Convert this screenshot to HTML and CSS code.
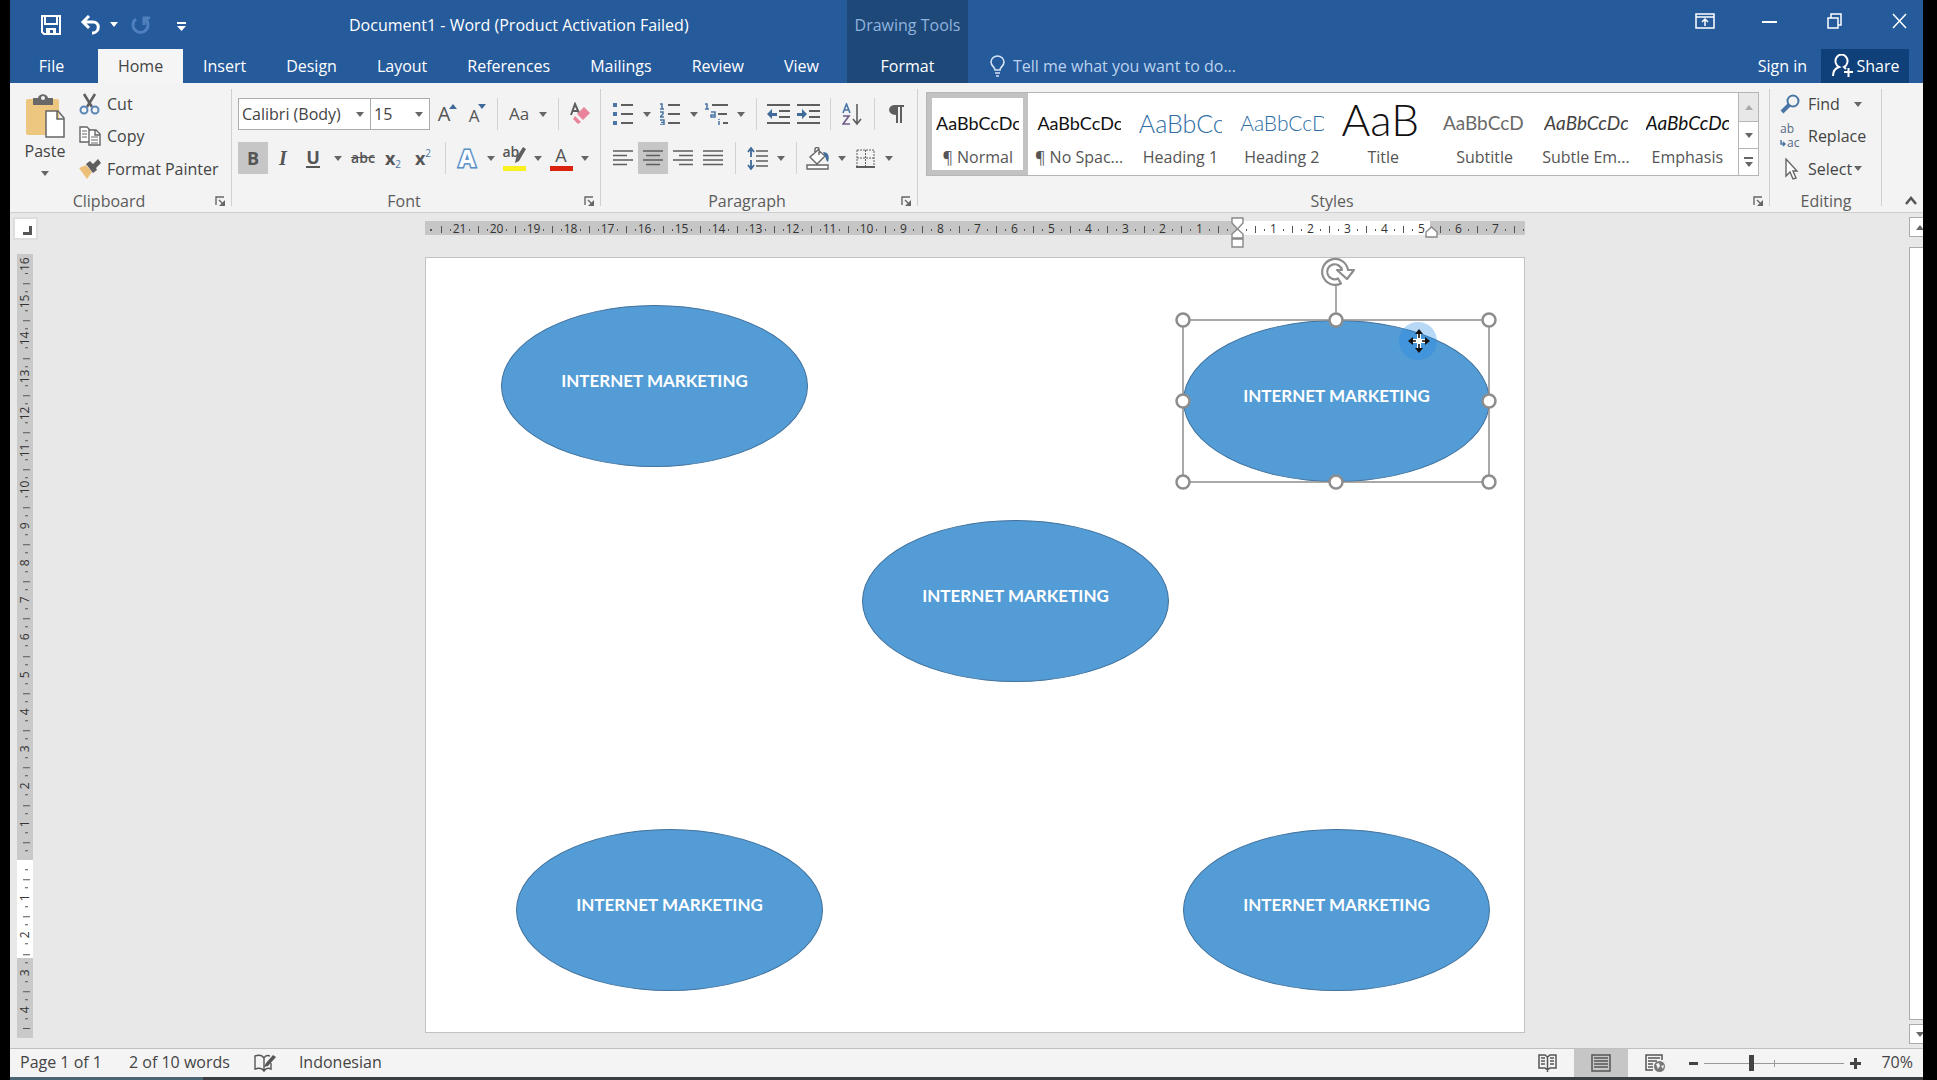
FILE: index.html
```html
<!DOCTYPE html>
<html lang="en">
<head>
<meta charset="utf-8">
<title>Document1 - Word</title>
<link rel="stylesheet" href="styles.css">
</head>
<body>
<div class="window">
  <header class="header">
    <div class="titlebar">
      <div class="quick">
        <button class="quick-btn" aria-label="Save"><svg width="20" height="20" viewBox="0 0 20 20"><path fill="none" stroke="#fff" stroke-width="2" d="M1 1h18v18H3l-2-2zM4 1v8h12V1"/><path fill="#fff" d="M5 13h10v6h-3v-4H9v4H5z"/></svg></button>
        <button class="quick-btn" aria-label="Undo"><svg width="22" height="20" viewBox="0 0 22 20"><path fill="none" stroke="#fff" stroke-width="3" d="M3 7h10c7 0 7 10 0 11h-1M9 1L3 7l6 6"/></svg></button>
        <button class="quick-caret" aria-label="Undo list"><i class="caret"></i></button>
        <button class="quick-btn" aria-label="Repeat"><svg width="20" height="20" viewBox="0 0 20 20"><path fill="none" stroke="#4f80bd" stroke-width="3" d="M5 4a7.500 7.500 0 1 0 9 0M13 10V3h6"/></svg></button>
        <button class="quick-custom" aria-label="Customize toolbar"><svg width="9" height="9" viewBox="0 0 9 9"><path fill="#fff" d="M0 0h9v2H0zM0 4h9L4.500 9z"/></svg></button>
      </div>
      <span class="doc-title">Document1 - Word (Product Activation Failed)</span>
    </div>
    <nav class="tabs">
      <button class="tab file">File</button>
      <button class="tab active">Home</button>
      <button class="tab">Insert</button>
      <button class="tab">Design</button>
      <button class="tab">Layout</button>
      <button class="tab">References</button>
      <button class="tab">Mailings</button>
      <button class="tab">Review</button>
      <button class="tab">View</button>
    </nav>
    <div class="context">
      <span class="context-title">Drawing Tools</span>
      <button class="tab">Format</button>
    </div>
    <div class="controls">
      <button aria-label="Ribbon display options"><svg width="20" height="16" viewBox="0 0 20 16"><path fill="none" stroke="#fff" stroke-width="1.500" d="M1 1h18v14H1zM1 4h18M10 13V7M7 9l3-3 3 3"/></svg></button>
      <button aria-label="Minimize"><svg width="15" height="16" viewBox="0 0 15 16"><path stroke="#fff" stroke-width="2" d="M0 9h15"/></svg></button>
      <button aria-label="Restore"><svg width="15" height="16" viewBox="0 0 15 16"><path fill="none" stroke="#fff" stroke-width="1.500" d="M1 5h10v10H1zM4 5V1h10v11h-3"/></svg></button>
      <button aria-label="Close"><svg width="15" height="16" viewBox="0 0 15 16"><path stroke="#fff" stroke-width="1.500" d="M1 1l13 14M14 1L1 15"/></svg></button>
    </div>
    <div class="tabs-end">
      <label class="tell"><svg width="15" height="22" viewBox="0 0 15 22"><path fill="none" stroke="#d5e4f5" stroke-width="1.600" d="M5 15c0-3-4-4-4-8a6.500 6 0 0 1 13 0c0 4-4 5-4 8zM5 18h5M6 21h3"/></svg><input type="text" placeholder="Tell me what you want to do..."></label>
      <a href="#" class="signin">Sign in</a>
      <button class="share"><svg width="23" height="24" viewBox="0 0 23 24"><path fill="none" stroke="#fff" stroke-width="2" d="M2 22c0-5 3-8 6-9a6 6.500 0 1 1 5 0l2 2M13 18h9M17.500 14v9"/></svg>Share</button>
    </div>
  </header>

  <section class="ribbon">
    <div class="group clipboard">
      <div class="group-body">
        <button class="paste">
          <svg width="40" height="44" viewBox="0 0 40 44"><rect x="1" y="5" width="33" height="36" rx="2" fill="#edc67f"/><path fill="#686868" d="M8 4h5c1-5 9-5 10 0h5v7H8z"/><circle cx="18" cy="4" r="2" fill="#f3f3f3"/><path fill="#fff" stroke="#666" stroke-width="1.500" d="M21 17h12l6 7v19H21zM32 17v8h7"/></svg>
          <span>Paste</span><i class="caret"></i>
        </button>
        <div class="stack">
          <button class="line"><svg width="22" height="22" viewBox="0 0 22 22"><path fill="none" stroke="#5e5e5e" stroke-width="2.500" d="M5 1l8 13M16 1L8 14"/><g fill="none" stroke="#5b86b5" stroke-width="2"><circle cx="5" cy="17" r="3.500"/><circle cx="16" cy="17" r="3.500"/></g></svg>Cut</button>
          <button class="line"><svg width="22" height="20" viewBox="0 0 22 20"><g fill="#fff" stroke="#666" stroke-width="1.400"><path d="M1 1h7l3 3v12H1z"/><path d="M10 4h7l4 4v11H10zM16 4v5h5"/></g><path stroke="#666" d="M3 5h5M3 8h5M3 11h5M12 11h7M12 14h7M12 17h7"/></svg>Copy</button>
          <button class="line"><svg width="22" height="20" viewBox="0 0 22 20"><path fill="#edc07a" d="M0 9l7-3 6 7-5 7z"/><path fill="#5e5e5e" d="M7 5l4-3 3 3 5-5 3 4-5 5 1 2-4 3z"/></svg>Format Painter</button>
        </div>
      </div>
      <div class="group-foot"><span>Clipboard</span><button class="launch" aria-label="Clipboard options"><svg width="11" height="11" viewBox="0 0 11 11"><use href="#launch"/></svg></button></div>
    </div>

    <div class="group font">
      <div class="group-body rows">
        <div class="row">
          <label class="combo family"><select aria-label="Font"><option>Calibri (Body)</option></select><i class="caret"></i></label>
          <label class="combo size"><select aria-label="Font size"><option>15</option></select><i class="caret"></i></label>
          <button class="tool letter" aria-label="Grow font"><span class="big">A</span><svg class="mark" width="8" height="5" viewBox="0 0 8 5"><path fill="#3f6b9b" d="M0 5h8L4 0z"/></svg></button>
          <button class="tool letter" aria-label="Shrink font"><span class="mid">A</span><svg class="mark" width="8" height="5" viewBox="0 0 8 5"><path fill="#3f6b9b" d="M0 0h8L4 5z"/></svg></button>
          <i class="sep"></i>
          <button class="tool" aria-label="Change case"><span class="case">Aa</span></button><button class="drop" aria-label="Case list"><i class="caret"></i></button>
          <i class="sep"></i>
          <button class="tool" aria-label="Clear formatting"><svg width="20" height="24" viewBox="0 0 20 24"><path fill="none" stroke="#5e5e5e" stroke-width="2" d="M1 13L5 2l4 9M2 9h6"/><path fill="#e8839b" d="M14 5l6 6-7 7-6-6z"/><path fill="#e8839b" d="M5 14l6 6-3 2-5-5z"/></svg></button>
        </div>
        <div class="row">
          <button class="tool on"><b>B</b></button>
          <button class="tool"><b class="serif">I</b></button>
          <button class="tool"><b class="under">U</b></button><button class="drop wide" aria-label="Underline styles"><i class="caret"></i></button>
          <button class="tool"><span class="strike">abc</span></button>
          <button class="tool"><b>x</b><sub>2</sub></button>
          <button class="tool"><b>x</b><sup>2</sup></button>
          <i class="sep"></i>
          <button class="tool"><b class="effect">A</b></button><button class="drop" aria-label="Text effects list"><i class="caret"></i></button>
          <button class="tool" aria-label="Highlight"><span class="swatch yellow">ab<svg class="pen" width="12" height="16" viewBox="0 0 12 16"><path fill="#5e5e5e" d="M9 0l3 2-7 12-4 2 1-5z"/></svg></span></button><button class="drop" aria-label="Highlight colors"><i class="caret"></i></button>
          <button class="tool" aria-label="Font color"><span class="swatch red">A</span></button><button class="drop" aria-label="Font colors"><i class="caret"></i></button>
        </div>
      </div>
      <div class="group-foot"><span>Font</span><button class="launch" aria-label="Font options"><svg width="11" height="11" viewBox="0 0 11 11"><use href="#launch"/></svg></button></div>
    </div>

    <div class="group paragraph">
      <div class="group-body rows">
        <div class="row">
          <button class="tool" aria-label="Bullets"><svg width="20" height="22" viewBox="0 0 20 22"><path fill="#4a76a5" d="M0 0h4v4H0zM0 9h4v4H0zM0 18h4v4H0z"/><path stroke="#5e5e5e" stroke-width="1.800" d="M8 2h12M8 11h12M8 20h12"/></svg></button><button class="drop" aria-label="Bullet list"><i class="caret"></i></button>
          <button class="tool" aria-label="Numbering"><svg width="20" height="22" viewBox="0 0 20 22"><path fill="none" stroke="#4a76a5" stroke-width="1.500" d="M0 1h2v5M0 6h4M0 9h3v2L0 14h4M0 17h4v5H0M1 19.500h3"/><path stroke="#5e5e5e" stroke-width="1.800" d="M8 2h12M8 11h12M8 20h12"/></svg></button><button class="drop" aria-label="Number list"><i class="caret"></i></button>
          <button class="tool" aria-label="Multilevel list"><svg width="24" height="22" viewBox="0 0 24 22"><path fill="none" stroke="#4a76a5" stroke-width="1.500" d="M0 1h2v5M0 6h4M6 9h4v5H6v-2h4M14 16v1M14 18v4"/><path stroke="#5e5e5e" stroke-width="1.800" d="M7 2h16M13 11h9M18 20h5"/></svg></button><button class="drop" aria-label="Level list"><i class="caret"></i></button>
          <i class="sep"></i>
          <button class="tool" aria-label="Decrease indent"><svg width="23" height="20" viewBox="0 0 23 20"><path stroke="#5e5e5e" stroke-width="1.800" d="M0 1h23M12 7h11M12 13h11M0 19h23"/><path fill="#3f6b9b" d="M0 10l5-5v4h5v3H5v3z"/></svg></button>
          <button class="tool" aria-label="Increase indent"><svg width="23" height="20" viewBox="0 0 23 20"><path stroke="#5e5e5e" stroke-width="1.800" d="M0 1h23M12 7h11M12 13h11M0 19h23"/><path fill="#3f6b9b" d="M10 10L5 5v4H0v3h5v3z"/></svg></button>
          <i class="sep"></i>
          <button class="tool" aria-label="Sort"><svg width="20" height="23" viewBox="0 0 20 23"><path fill="none" stroke="#4a76a5" stroke-width="1.600" d="M1 10l3.500-9L8 10M2 7h5"/><path fill="none" stroke="#6d5b85" stroke-width="1.600" d="M1 13h6l-6 8h7"/><path fill="none" stroke="#5e5e5e" stroke-width="1.600" d="M15 1v19M11 16l4 5 4-5"/></svg></button>
          <i class="sep"></i>
          <button class="tool" aria-label="Show marks"><svg width="15" height="18" viewBox="0 0 15 18"><path fill="#5e5e5e" d="M15 0v2h-2v16h-2V2H9v16H7V10C-2 10-2 0 6 0z"/></svg></button>
        </div>
        <div class="row">
          <button class="tool" aria-label="Align left"><svg width="20" height="16" viewBox="0 0 20 16"><path stroke="#5e5e5e" stroke-width="1.600" d="M0 1h20M0 5.500h14M0 10h20M0 14.500h14"/></svg></button>
          <button class="tool on" aria-label="Center"><svg width="20" height="16" viewBox="0 0 20 16"><path stroke="#5e5e5e" stroke-width="1.600" d="M0 1h20M3 5.500h14M0 10h20M3 14.500h14"/></svg></button>
          <button class="tool" aria-label="Align right"><svg width="20" height="16" viewBox="0 0 20 16"><path stroke="#5e5e5e" stroke-width="1.600" d="M0 1h20M6 5.500h14M0 10h20M6 14.500h14"/></svg></button>
          <button class="tool" aria-label="Justify"><svg width="20" height="16" viewBox="0 0 20 16"><path stroke="#5e5e5e" stroke-width="1.600" d="M0 1h20M0 5.500h20M0 10h20M0 14.500h20"/></svg></button>
          <i class="sep"></i>
          <button class="tool" aria-label="Line spacing"><svg width="21" height="23" viewBox="0 0 21 23"><path stroke="#5e5e5e" stroke-width="1.600" d="M9 4h12M9 9h12M9 14h12M9 19h12"/><path fill="none" stroke="#3f6b9b" stroke-width="1.800" d="M4 1v9M1 5l3-4 3 4M4 13v9M1 18l3 4 3-4"/></svg></button><button class="drop" aria-label="Spacing list"><i class="caret"></i></button>
          <i class="sep"></i>
          <button class="tool" aria-label="Shading"><svg width="24" height="23" viewBox="0 0 24 23"><path fill="#fff" stroke="#666" stroke-width="1.400" d="M1 18h21v4H1zM4 10l8-7 7 6-8 8zM9 6V2c0-2 4-2 4 0v6"/><path fill="#3f6b9b" d="M17 5c5 0 7 4 5 10-2-1-2-4-3-6z"/></svg></button><button class="drop" aria-label="Shading colors"><i class="caret"></i></button>
          <button class="tool" aria-label="Borders"><svg width="19" height="19" viewBox="0 0 19 19"><path fill="none" stroke="#5e5e5e" stroke-dasharray="2 1" d="M1 1h17v16M1 1v16M9.500 1v16M1 9h17"/><path stroke="#5e5e5e" stroke-width="2" d="M0 18h19"/></svg></button><button class="drop" aria-label="Border list"><i class="caret"></i></button>
        </div>
      </div>
      <div class="group-foot"><span>Paragraph</span><button class="launch" aria-label="Paragraph options"><svg width="11" height="11" viewBox="0 0 11 11"><use href="#launch"/></svg></button></div>
    </div>

    <div class="group styles">
      <div class="gallery">
        <button class="style selected"><span class="sample">AaBbCcDc</span><span>¶ Normal</span></button>
        <button class="style"><span class="sample">AaBbCcDc</span><span>¶ No Spac...</span></button>
        <button class="style"><span class="sample h1">AaBbCc</span><span>Heading 1</span></button>
        <button class="style"><span class="sample h2">AaBbCcD</span><span>Heading 2</span></button>
        <button class="style"><span class="sample title">AaB</span><span>Title</span></button>
        <button class="style"><span class="sample sub">AaBbCcD</span><span>Subtitle</span></button>
        <button class="style"><span class="sample subtle">AaBbCcDc</span><span>Subtle Em...</span></button>
        <button class="style"><span class="sample emph">AaBbCcDc</span><span>Emphasis</span></button>
        <div class="gallery-nav">
          <button class="off" aria-label="Previous styles"><i class="caret up"></i></button>
          <button aria-label="Next styles"><i class="caret"></i></button>
          <button class="more" aria-label="More styles"><i class="caret"></i></button>
        </div>
      </div>
      <div class="group-foot"><span>Styles</span><button class="launch" aria-label="Styles options"><svg width="11" height="11" viewBox="0 0 11 11"><use href="#launch"/></svg></button></div>
    </div>

    <div class="group editing">
      <div class="group-body">
        <div class="stack">
          <button class="line"><svg width="22" height="20" viewBox="0 0 22 20"><circle cx="13" cy="7" r="5.500" fill="none" stroke="#4a76a5" stroke-width="2"/><path stroke="#4a76a5" stroke-width="4" d="M9 11l-7 7"/></svg>Find<i class="caret far"></i></button>
          <button class="line"><span class="abac"><span>ab</span><span class="ac"><svg width="6" height="7" viewBox="0 0 6 7"><path fill="none" stroke="#4a76a5" stroke-width="1.500" d="M1 0v4h4M3 2l2 2-2 2"/></svg>ac</span></span>Replace</button>
          <button class="line"><svg width="22" height="22" viewBox="0 0 22 22"><path fill="#fff" stroke="#666" stroke-width="1.400" d="M6 1v17l4-4 3 7 3-1-3-7h4z"/></svg>Select<i class="caret near"></i></button>
        </div>
      </div>
      <div class="group-foot"><span>Editing</span></div>
    </div>
    <button class="collapse" aria-label="Collapse ribbon"><svg width="12" height="9" viewBox="0 0 12 9"><path fill="none" stroke="#555" stroke-width="2.500" d="M1 8l5-6 5 6"/></svg></button>
  </section>

  <main class="workspace">
    <div class="left">
      <button class="tabstop" aria-label="Tab stop"><svg width="9" height="9" viewBox="0 0 9 9"><path fill="none" stroke="#555" stroke-width="3" d="M0 7.500h7.500V0"/></svg></button>
      <div class="vruler">
        <span class="first">16</span><span>15</span><span>14</span><span>13</span><span>12</span><span>11</span><span>10</span><span>9</span><span>8</span><span>7</span><span>6</span><span>5</span><span>4</span><span>3</span><span>2</span><span>1</span><span></span><span>1</span><span>2</span><span>3</span><span>4</span><span class="last"></span>
      </div>
    </div>
    <div class="view">
      <div class="hruler">
        <span class="first"></span><span>21</span><span>20</span><span>19</span><span>18</span><span>17</span><span>16</span><span>15</span><span>14</span><span>13</span><span>12</span><span>11</span><span>10</span><span>9</span><span>8</span><span>7</span><span>6</span><span>5</span><span>4</span><span>3</span><span>2</span><span>1</span><span></span><span>1</span><span>2</span><span>3</span><span>4</span><span>5</span><span>6</span><span>7</span><span class="last"></span>
        <svg class="indent" width="13" height="32" viewBox="0 0 13 32"><path fill="#fff" stroke="#888" stroke-width="1.400" d="M1 1h11v5l-5.500 6L1 6zM1 21h11v-4l-5.500-5L1 17zM1 22h11v8H1z"/></svg>
        <svg class="right-indent" width="13" height="12" viewBox="0 0 13 12"><path fill="#fff" stroke="#888" stroke-width="1.400" d="M1 11h11V6L6.500 1 1 6z"/></svg>
      </div>
      <div class="page">
        <div class="oval o1">INTERNET MARKETING</div>
        <div class="oval o2">INTERNET MARKETING</div>
        <div class="oval o3">INTERNET MARKETING</div>
        <div class="oval o4">INTERNET MARKETING</div>
        <div class="oval o5">INTERNET MARKETING</div>
        <svg class="selection" width="346" height="240" viewBox="0 0 346 240">
          <circle cx="255" cy="81" r="19" fill="#1f86e6" fill-opacity=".32"/>
          <path fill="none" stroke="#8d8d8d" stroke-width="1.500" d="M20 60h306v162H20zM173 26v34"/>
          <g fill="#fff" stroke="#8d8d8d" stroke-width="2.500"><circle cx="20" cy="60" r="6.500"/><circle cx="173" cy="60" r="6.500"/><circle cx="326" cy="60" r="6.500"/><circle cx="20" cy="141" r="6.500"/><circle cx="326" cy="141" r="6.500"/><circle cx="20" cy="222" r="6.500"/><circle cx="173" cy="222" r="6.500"/><circle cx="326" cy="222" r="6.500"/></g>
          <path fill="#fff" stroke="#8d8d8d" stroke-width="2.200" stroke-linejoin="round" d="M178 23.500A13 13 0 1 1 185 10h6l-7 9-10-9h5A7.500 7.500 0 1 0 175 18.500z"/>
          <path fill="none" stroke="#fff" stroke-width="4" d="M256 73v17M248 81h17"/>
          <path fill="none" stroke="#111" stroke-width="1.600" d="M256 74v4M256 84v4M249 81h4M259 81h4"/>
          <path fill="#111" d="M256 69l4 5h-8zM256 93l4-5h-8zM245 81l5-4v8zM267 81l-5-4v8z"/>
        </svg>
      </div>
    </div>
    <div class="scroll">
      <button class="scroll-btn" aria-label="Scroll up"><i class="caret up"></i></button>
      <div class="thumb"></div>
      <button class="scroll-btn" aria-label="Scroll down"><i class="caret"></i></button>
    </div>
  </main>

  <footer class="status">
    <span class="pages">Page 1 of 1</span>
    <span class="words">2 of 10 words</span>
    <button class="proof" aria-label="Proofing"><svg width="22" height="19" viewBox="0 0 22 19"><path fill="none" stroke="#555" stroke-width="1.400" d="M10 4C8 1 4 1 1 2v13c3-1 7-1 9 2 2-3 5-3 7-2V9M10 4v13M10 4c1-2 3-3 6-2"/><path fill="#555" d="M19 1l3 2-8 9-4 1 2-4z"/></svg></button>
    <span class="lang">Indonesian</span>
    <button class="mode" aria-label="Read mode"><svg width="19" height="18" viewBox="0 0 19 18"><path fill="none" stroke="#555" stroke-width="1.500" d="M9.500 3L7 1H1v13h6l2.500 2 2.500-2h6V1h-6zM9.500 3v15M3 4h4M3 7h4M3 10h4M12 4h4M12 7h4M12 10h4"/></svg></button>
    <button class="mode on" aria-label="Print layout"><svg width="20" height="18" viewBox="0 0 20 18"><path fill="none" stroke="#555" stroke-width="1.500" d="M1 1h18v16H1zM3 4h14M3 7h14M3 10h14M3 13h14"/></svg></button>
    <button class="mode" aria-label="Web layout"><svg width="20" height="18" viewBox="0 0 20 18"><path fill="none" stroke="#555" stroke-width="1.500" d="M8 16H1V1h16v5M3 4h12M3 7h9M3 10h5M3 13h5"/><circle cx="14.500" cy="12.500" r="5.500" fill="#777"/><path fill="#f3f3f3" d="M11 10l3-1 1 3-2 3zM16 12l3-1-1 4z"/></svg></button>
    <button class="zoom-btn" aria-label="Zoom out"><svg width="9" height="11" viewBox="0 0 9 11"><path stroke="#444" stroke-width="3" d="M0 5.500h9"/></svg></button>
    <input class="zoom" type="range" min="0" max="100" value="33" aria-label="Zoom">
    <button class="zoom-btn" aria-label="Zoom in"><svg width="11" height="11" viewBox="0 0 11 11"><path stroke="#444" stroke-width="3" d="M0 5.500h11M5.500 0v11"/></svg></button>
    <span class="percent">70%</span>
  </footer>
  <div class="taskbar"><i></i></div>
</div>
<svg class="defs" width="0" height="0"><defs><g id="launch"><path fill="none" stroke="#666" stroke-width="1.400" d="M1 9V1h8M4 4l4 4"/><path fill="#666" d="M10 4v6H4z"/></g></defs></svg>
</body>
</html>
```
FILE: styles.css
```css
* { box-sizing: border-box; }
body {
  margin: 0;
  background: #000;
  color: #444;
  font: 16px/20px "Open Sans", "Noto Sans", sans-serif;
}
button, input, select { font: inherit; color: inherit; background: none; border: 0; margin: 0; padding: 0; border-radius: 0; }
button { display: flex; align-items: center; justify-content: center; white-space: nowrap; }
a { color: inherit; text-decoration: none; }
svg { display: block; flex: none; }
.defs { position: absolute; }
.window {
  min-height: 100vh;
  margin: 0 14px 0 10px;
  display: grid;
  grid-template-columns: minmax(0, 1fr);
  grid-template-rows: 83px 130px 1fr 29px 3px;
  background: #e8e8e8;
  overflow: hidden;
}
.caret { width: 0; height: 0; flex: none; border: 4px solid transparent; border-top: 5px solid #666; border-bottom: 0; }
.caret.up { border-top: 0; border-bottom: 5px solid #666; }

/* header */
.header {
  display: grid;
  grid-template-columns: 837px 121px 1fr;
  grid-template-rows: 49px 34px;
  background: #255a9b;
  color: #fff;
}
.titlebar { display: flex; align-items: center; }
.quick { display: flex; align-items: center; width: 339px; height: 42px; padding-left: 26px; }
.quick-btn { width: 30px; margin-right: 10px; }
.quick-btn + .quick-caret { width: 16px; margin: 0 4px 0 -10px; }
.quick-caret .caret { border-top-color: #fff; }
.quick-custom { width: 24px; margin-left: 3px; padding-top: 4px; }
.tabs { display: flex; grid-column: 1; grid-row: 2; }
.tab { padding: 0 20px; }
.tab.file { width: 88px; padding: 0 5px 0 0; }
.tab.active { width: 85px; background: #f5f5f5; color: #444; padding: 0; }
.context {
  grid-column: 2;
  grid-row: 1 / 3;
  display: grid;
  grid-template-rows: 49px 34px;
  background: #1e4878;
  justify-items: center;
}
.context-title { align-self: center; color: #8fb3de; }
.controls { display: flex; justify-content: flex-end; height: 42px; margin-right: -9px; }
.controls button { width: 65px; }
.tabs-end { grid-column: 3; grid-row: 2; display: flex; align-items: center; padding: 0 14px 0 22px; }
.tell { display: flex; align-items: center; gap: 8px; flex: 1; }
.tell input { width: 260px; }
.tell input::placeholder { color: #bcd3ee; opacity: 1; }
.signin { margin-right: 14px; }
.share { width: 88px; height: 34px; background: #10407a; gap: 3px; }

/* ribbon */
.ribbon { display: flex; background: #f3f3f3; border-bottom: 1px solid #cfcfcf; }
.group { position: relative; display: flex; flex-direction: column; padding-top: 6px; }
.group::after { content: ""; position: absolute; right: 0; top: 6px; bottom: 6px; width: 1px; background: #cfcfcf; }
.clipboard { width: 222px; }
.font { width: 369px; padding-left: 6px; }
.paragraph { width: 317px; padding-left: 7px; }
.styles { flex: 1; min-width: 0; }
.editing { width: 112px; }
.group-body { display: flex; height: 100px; }
.group-foot { display: flex; align-items: center; justify-content: center; height: 20px; margin-top: 2px; padding-right: 24px; color: #5c5c5c; position: relative; }
.launch { position: absolute; right: 6px; top: 5px; }
.editing .group-foot { padding: 0; }
.font .group-foot { padding-right: 31px; }
.paragraph .group-foot { padding-right: 32px; }
.paste { flex-direction: column; width: 62px; margin-left: 4px; justify-content: flex-start; padding-top: 5px; }
.paste span { margin: 3px 0 10px; }
.stack { display: grid; grid-template-rows: 30px 34px 31px; padding-left: 3px; }
.line { justify-content: flex-start; gap: 6px; }
.rows { flex-direction: column; gap: 12px; padding-top: 9px; }
.row { display: flex; height: 32px; align-items: stretch; }
.tool { width: 30px; font-size: 18px; color: #555; }
.tool.letter { padding-left: 5px; }
.on { background: #c6c6c6; }
.drop { width: 17px; }
.drop.wide { width: 20px; }
.sep { width: 14px; flex: none; background: linear-gradient(#d2d2d2, #d2d2d2) center / 1px 100% no-repeat; }
.combo { display: grid; background: #fff; border: 1px solid #ababab; align-items: center; }
.combo.family { width: 132px; border-right-width: 0; }
.combo.size { width: 60px; }
.combo select { grid-area: 1 / 1; width: 100%; height: 30px; padding: 0 0 0 3px; appearance: none; }
.combo .caret { grid-area: 1 / 1; justify-self: end; margin-right: 6px; }
.mark { align-self: flex-start; margin: 6px 0 0 -1px; }
.big { font-size: 20px; }
.mid { font-size: 17px; padding-top: 4px; }
.case { font-size: 17px; }
.serif { font-family: "Liberation Serif", serif; font-style: italic; font-size: 20px; }
.under { border-bottom: 2px solid #555; line-height: 17px; }
.strike { font-size: 14px; font-weight: 600; text-decoration: line-through; }
.tool sub, .tool sup { font-size: 10px; line-height: 10px; color: #4a76a5; align-self: flex-end; margin-bottom: 5px; }
.tool sup { align-self: flex-start; margin-top: 6px; }
.effect { font-size: 24px; color: #fff; -webkit-text-stroke: 3px #4c86c0; paint-order: stroke fill; text-shadow: 0 0 3px #7fb0de; }
.swatch { position: relative; width: 23px; height: 26px; line-height: 20px; border-bottom: 5px solid; }
.yellow { border-color: #f9f01e; font-size: 14px; line-height: 14px; text-align: left; font-weight: 600; }
.red { border-color: #d9230f; font-size: 18px; }
.pen { position: absolute; right: 0; top: 2px; }

.gallery { display: flex; height: 84px; margin: 3px 11px 0 8px; border: 1px solid #b5b5b5; background: #fff; }
.style { flex: 1; min-width: 0; flex-direction: column; justify-content: flex-start; padding: 12px 9px 0; color: #555; }
.style.selected { box-shadow: inset 0 0 0 5px #c2c2c2, inset 0 0 0 6px #fff; }
.sample { width: 100%; height: 32px; margin-bottom: 10px; overflow: hidden; text-align: left; font: 18px/36px Lato, sans-serif; color: #111; }
.sample.h1 { font-size: 25px; font-weight: 300; color: #2e6ea5; }
.sample.h2 { font-size: 21px; font-weight: 300; color: #2e6ea5; }
.sample.title { font-size: 44px; font-weight: 300; line-height: 28px; }
.sample.sub { font-size: 19px; color: #6a6a6a; }
.sample.subtle { font-size: 19px; font-style: italic; color: #444; }
.sample.emph { font-size: 19px; font-style: italic; }
.gallery-nav { width: 20px; display: grid; grid-template-rows: 28px 27px 27px; border-left: 1px solid #b5b5b5; }
.gallery-nav button + button { border-top: 1px solid #b5b5b5; }
.gallery-nav .off { background: #e8e8e8; }
.gallery-nav .off .caret { border-bottom-color: #aaa; }
.gallery-nav .more { flex-direction: column; gap: 3px; }
.more::before { content: ""; width: 9px; height: 2px; background: #666; }
.styles .group-foot { margin-top: 15px; }
.editing .stack { padding-left: 10px; }
.line .far { margin-left: 8px; }
.line .near { margin-left: -4px; }
.abac { display: grid; width: 22px; font-size: 12px; line-height: 14px; color: #556a85; text-align: left; }
.ac { display: flex; align-items: center; gap: 1px; }
.collapse { width: 41px; height: 12px; margin-bottom: 6px; padding-left: 17px; align-self: flex-end; }

/* workspace */
.workspace { display: grid; grid-template-columns: 31px 1fr 14px; }
.left { display: flex; flex-direction: column; padding: 6px 0 10px 5px; }
.tabstop { width: 21px; height: 19px; background: #fff; outline: 2px solid #dedede; padding: 4px 0 0 4px; }
.vruler {
  flex: 1;
  width: 16px;
  margin: 16px 0 0 2px;
  display: flex;
  flex-direction: column;
  background: linear-gradient(#c9c9c9 606px, #fff 606px, #fff 704px, #c9c9c9 704px);
}
.vruler span {
  flex: 1;
  writing-mode: vertical-rl;
  transform: rotate(180deg);
  text-align: center;
  font-size: 12px;
  line-height: 16px;
  color: #333;
  background:
    linear-gradient(#555, #555) 3px 100% / 7px 1px no-repeat,
    linear-gradient(#555, #555) 5px 9px / 3px 1px no-repeat,
    linear-gradient(#555, #555) 5px 28px / 3px 1px no-repeat;
}
.vruler .first { flex: none; height: 29px; padding-top: 9px; background: linear-gradient(#555, #555) 5px 9px / 3px 1px no-repeat; }
.vruler .last { flex: none; height: 10px; background: linear-gradient(#555, #555) 3px 100% / 7px 1px no-repeat; }
.view { display: flex; flex-direction: column; align-items: center; }
.hruler {
  position: relative;
  display: flex;
  width: 1100px;
  height: 14px;
  margin: 8px 0 22px;
  background: linear-gradient(90deg, #c6c6c6 812px, #fff 812px, #fff 1005px, #c6c6c6 1005px);
}
.hruler span {
  width: 37px;
  flex: none;
  text-align: center;
  font-size: 12px;
  line-height: 16px;
  color: #333;
  background:
    linear-gradient(#555, #555) 0 5px / 1px 7px no-repeat,
    linear-gradient(#555, #555) 9px 8px / 1px 2px no-repeat,
    linear-gradient(#555, #555) 28px 8px / 1px 2px no-repeat;
}
.hruler .first { width: 16px; background: linear-gradient(#555, #555) 5px 8px / 2px 2px no-repeat; }
.hruler .last { width: 10px; }
.indent { position: absolute; left: 806px; top: -4px; }
.right-indent { position: absolute; left: 1000px; top: 5px; }
.page { position: relative; width: 1100px; height: 776px; background: #fff; border: 1px solid #c2c2c2; }
.oval {
  position: absolute;
  display: flex;
  align-items: center;
  justify-content: center;
  width: 307px;
  height: 162px;
  padding-bottom: 10px;
  border: 1px solid #41719c;
  border-radius: 50%;
  background: #539cd5;
  color: #fff;
  font: bold 17px/20px Lato, sans-serif;
}
.o1 { left: 75px; top: 47px; }
.o2 { left: 757px; top: 62px; }
.o3 { left: 436px; top: 262px; }
.o4 { left: 90px; top: 571px; }
.o5 { left: 757px; top: 571px; }
.selection { position: absolute; left: 737px; top: 2px; overflow: visible; }
.scroll { display: flex; flex-direction: column; gap: 4px; padding: 4px 0; overflow: hidden; }
.scroll-btn { width: 21px; height: 20px; border: 1px solid #ababab; background: #fff; }
.scroll-btn:first-child { margin-bottom: 6px; }
.thumb { width: 21px; flex: 1; border: 1px solid #ababab; background: #fff; }

/* status bar */
.status { display: flex; align-items: center; background: #f4f4f4; border-top: 1px solid #c0c0c0; padding: 0 10px; }
.status span { padding-bottom: 2px; }
.words { margin: 0 24px 0 27px; }
.lang { margin-left: 23px; flex: 1; }
.mode { width: 54px; height: 28px; }
.zoom-btn { width: 22px; }
.zoom { appearance: none; width: 140px; height: 18px; background: linear-gradient(#999, #999) center / 100% 1px no-repeat, linear-gradient(#999, #999) 50% 50% / 1px 7px no-repeat; }
.zoom::-webkit-slider-thumb { appearance: none; width: 5px; height: 16px; background: #444; }
.percent { margin-left: 15px; }
.taskbar { background: #3a3d42; }
.taskbar i { display: block; width: 193px; height: 3px; background: #4b6672; }
```
